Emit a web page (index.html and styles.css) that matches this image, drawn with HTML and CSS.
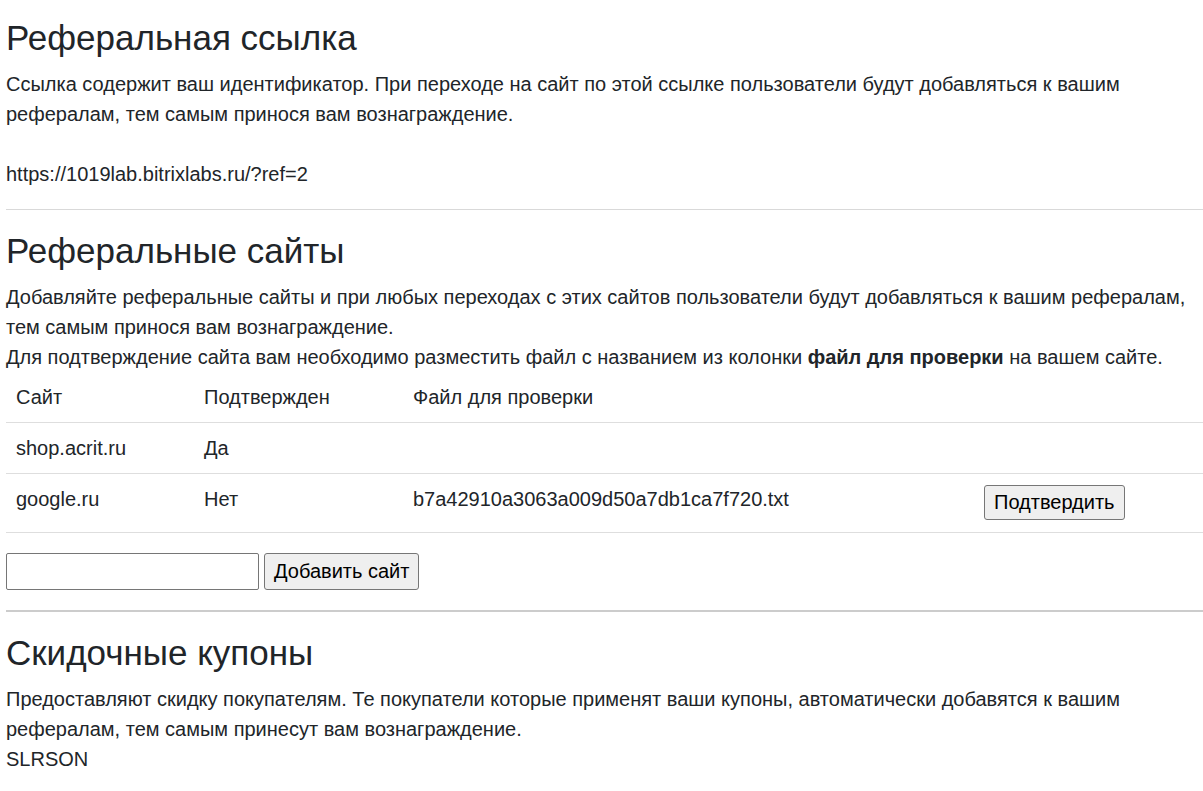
FILE: index.html
```html
<!DOCTYPE html>
<html lang="ru">
<head>
<meta charset="utf-8">
<title>Рефералы</title>
<link rel="stylesheet" href="styles.css">
</head>
<body>
<div class="page">
  <section class="block">
    <h3 class="title">Реферальная ссылка</h3>
    <p class="text">Ссылка содержит ваш идентификатор. При переходе на сайт по этой ссылке пользователи будут добавляться к вашим рефералам, тем самым принося вам вознаграждение.</p>
    <p class="text link-line">https://1019lab.bitrixlabs.ru/?ref=2</p>
  </section>
  <hr class="sep sep-light">
  <section class="block">
    <h3 class="title">Реферальные сайты</h3>
    <p class="text">Добавляйте реферальные сайты и при любых переходах с этих сайтов пользователи будут добавляться к вашим рефералам, тем самым принося вам вознаграждение.<br>Для подтверждение сайта вам необходимо разместить файл с названием из колонки <b>файл для проверки</b> на вашем сайте.</p>
    <table class="sites">
      <thead>
        <tr>
          <th class="c-site">Сайт</th>
          <th class="c-ok">Подтвержден</th>
          <th class="c-file">Файл для проверки</th>
          <th class="c-act"></th>
        </tr>
      </thead>
      <tbody>
        <tr>
          <td>shop.acrit.ru</td>
          <td>Да</td>
          <td></td>
          <td></td>
        </tr>
        <tr>
          <td>google.ru</td>
          <td>Нет</td>
          <td>b7a42910a3063a009d50a7db1ca7f720.txt</td>
          <td><button class="btn btn-confirm" type="button">Подтвердить</button></td>
        </tr>
      </tbody>
    </table>
    <form class="add-form">
      <input class="field" type="text">
      <button class="btn btn-add" type="button">Добавить сайт</button>
    </form>
  </section>
  <hr class="sep sep-dark">
  <section class="block">
    <h3 class="title">Скидочные купоны</h3>
    <p class="text">Предоставляют скидку покупателям. Те покупатели которые применят ваши купоны, автоматически добавятся к вашим рефералам, тем самым принесут вам вознаграждение.<br>SLRSON</p>
  </section>
</div>
</body>
</html>
```

FILE: styles.css
```css
html, body {
  margin: 0;
  padding: 0;
  background: #fff;
}

body {
  font-family: "Liberation Sans", Arial, sans-serif;
  font-size: 20px;
  line-height: 30px;
  color: #212529;
}

.page {
  padding: 17px 0 0 6px;
}

.title {
  margin: 0 0 10px;
  font-size: 35px;
  line-height: 42px;
  font-weight: 400;
  color: #212529;
}

.text {
  margin: 0;
}

.link-line {
  margin-top: 30px;
}

.sep {
  border: 0;
  margin: 20px 0 20px;
  padding: 0;
}

.sep-light {
  border-top: 1px solid #d9d9d9;
  height: 0;
}

.sep-dark {
  border-top: 2px solid #cccccc;
  height: 0;
  margin: 20px 0 20px;
}

.sites {
  width: 100%;
  border-collapse: collapse;
  border-spacing: 0;
}

.sites th,
.sites td {
  padding: 10px 10px;
  text-align: left;
  font-weight: 400;
  vertical-align: top;
  line-height: 30px;
}

.sites tbody td {
  border-top: 1px solid #dedede;
}

.sites tbody tr:last-child td {
  border-bottom: 1px solid #dedede;
}

.c-site { width: 168px; }
.c-ok { width: 189px; }
.c-file { width: 551px; }

.btn {
  font-family: "Liberation Sans", Arial, sans-serif;
  font-size: 20px;
  line-height: 23px;
  color: #000;
  background: #efefef;
  border: 1px solid #767676;
  border-radius: 3px;
  padding: 5px 9px;
  margin: 0;
  cursor: default;
}

.btn-confirm {
  display: inline-block;
  vertical-align: top;
  height: 35px;
  margin: 1px 0 2px;
}

.add-form {
  display: flex;
  gap: 5px;
  margin: 20px 0 0;
}

.field {
  width: 253px;
  height: 37px;
  box-sizing: border-box;
  border: 1px solid #767676;
  border-radius: 2px;
  font-family: "Liberation Sans", Arial, sans-serif;
  font-size: 20px;
  padding: 2px 4px;
  margin: 0;
}

.btn-add {
  height: 37px;
  margin: 0;
  padding: 5px 9px;
}
```
